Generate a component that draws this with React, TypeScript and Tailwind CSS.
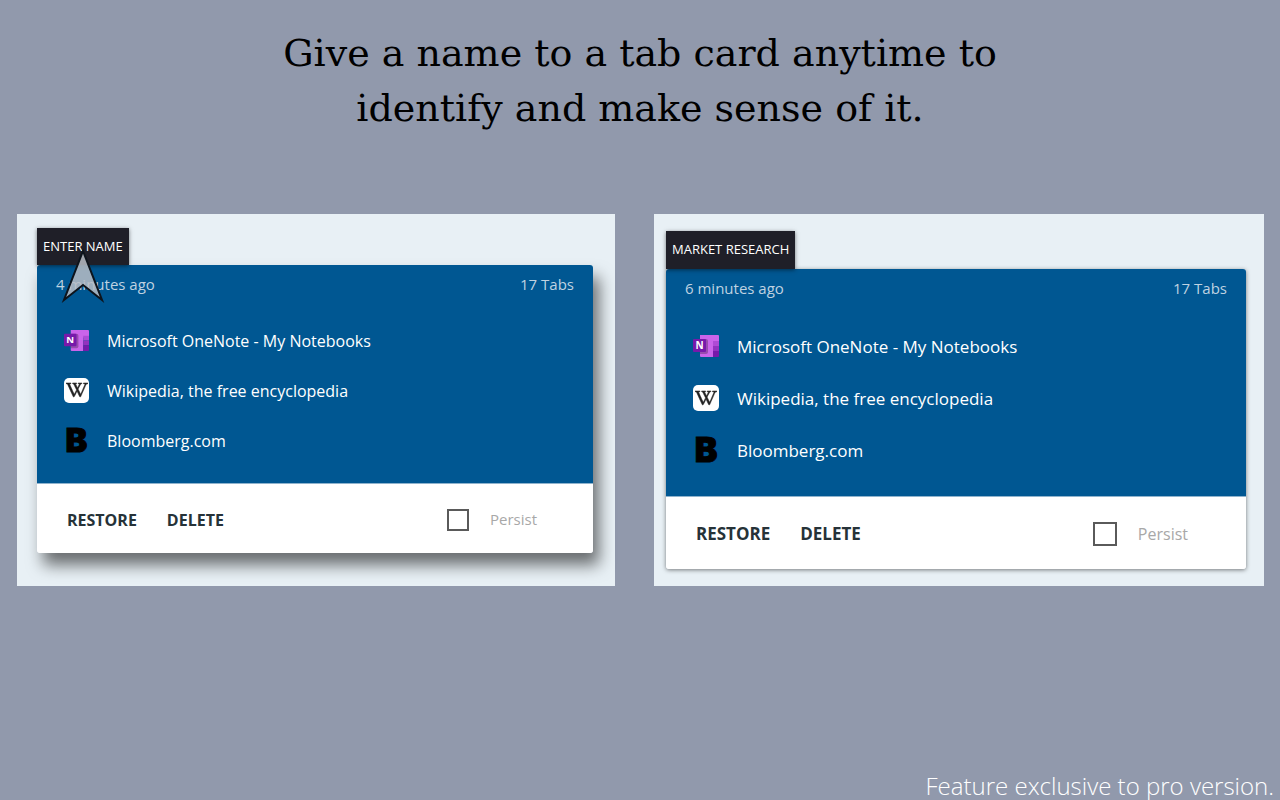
import React from "react";
import { clsx } from "clsx";
import { SiWikipedia } from "react-icons/si";

interface TabCardProps {
  id: string;
  name: string;
  age: string;
  count: string;
  large?: boolean;
  pointer?: boolean;
}

interface TabRowProps {
  icon: React.ReactNode;
  title: string;
  large?: boolean;
}

export default function App() {
  return (
    <main className="flex min-h-screen flex-col overflow-hidden bg-[#9199ac] font-['Open_Sans','Noto_Sans',sans-serif]">
      <h1 className="mx-auto max-w-3xl pt-[26px] text-center font-['DejaVu_Serif',serif] text-[38px] leading-[55px] text-black">
        Give a name to a tab card anytime to identify and make sense of it.
      </h1>

      <div className="mt-[78px] grid grid-cols-[598fr_610fr] items-stretch gap-[39px] pr-4 pl-[17px]">
        <section className="bg-[#e8f0f5] pt-[14px] pr-[22px] pb-[33px] pl-5">
          <TabCard id="unnamed" name="ENTER NAME" age="4 minutes ago" count="17 Tabs" pointer />
        </section>
        <section className="bg-[#e8f0f5] pt-[17px] pr-[18px] pb-4 pl-3">
          <TabCard id="named" name="MARKET RESEARCH" age="6 minutes ago" count="17 Tabs" large />
        </section>
      </div>

      <p className="mt-auto pr-1.5 pb-0.5 text-right text-[24px] leading-6 font-light text-white">
        Feature exclusive to pro version.
      </p>
    </main>
  );
}

function TabCard({ id, name, age, count, large, pointer }: TabCardProps) {
  return (
    <article>
      <div className="relative z-10 w-fit">
        <button
          type="button"
          className={clsx(
            "block bg-[#1f1f28] px-1.5 text-[13px] text-white shadow-[0_1px_4px_rgba(0,0,0,0.5)]",
            large ? "h-[38px] font-medium" : "h-[37px]"
          )}
        >
          {name}
        </button>
        {pointer && <Pointer />}
      </div>

      <div
        className={clsx(
          "overflow-hidden rounded-[3px]",
          large ? "shadow-[0_1px_4px_rgba(0,0,0,0.5)]" : "shadow-[6px_12px_16px_rgba(0,0,0,0.55)]"
        )}
      >
        <div className={clsx("bg-[#005792]", large ? "pb-5" : "pb-[18px]")}>
          <div className="flex h-[38px] items-center justify-between px-[19px] text-[15px] text-[#bfd2e1]">
            <span>{age}</span>
            <span>{count}</span>
          </div>
          <ul className={large ? "pt-[13px]" : "pt-3"}>
            <TabRow icon={<OneNoteIcon />} title="Microsoft OneNote - My Notebooks" large={large} />
            <TabRow icon={<WikipediaIcon />} title="Wikipedia, the free encyclopedia" large={large} />
            <TabRow icon={<BloombergIcon />} title="Bloomberg.com" large={large} />
          </ul>
        </div>

        <div
          className={clsx(
            "flex items-center border-t border-[#8fb3cd] bg-white pt-0.5 pl-[30px] text-[#263238]",
            large ? "h-[73px] pr-[58px]" : "h-[70px] pr-[56px]"
          )}
        >
          <div className={clsx("flex gap-[30px] font-bold", large ? "text-[17px]" : "text-[16px]")}>
            <button type="button">RESTORE</button>
            <button type="button">DELETE</button>
          </div>
          <div className="ml-auto flex items-center gap-[21px]">
            <input
              id={`persist-${id}`}
              type="checkbox"
              className={clsx("appearance-none border-2 border-[#5a5a5a] bg-white", large ? "size-6" : "size-[22px]")}
            />
            <label
              htmlFor={`persist-${id}`}
              className={clsx("text-[#a8a8a8]", large ? "text-[16px]" : "text-[15px]")}
            >
              Persist
            </label>
          </div>
        </div>
      </div>
    </article>
  );
}

function TabRow({ icon, title, large }: TabRowProps) {
  return (
    <li
      className={clsx(
        "flex items-center gap-[18px] pl-[27px] text-white",
        large ? "h-[52px] text-[17px]" : "h-[50px] text-[16px]"
      )}
    >
      <span className={clsx("shrink-0", large ? "size-[26px]" : "size-[25px]")}>{icon}</span>
      <span className="pt-0.5">{title}</span>
    </li>
  );
}

function OneNoteIcon() {
  return (
    <svg viewBox="0 0 26 26" className="size-full" aria-hidden="true">
      <path d="M7 2h18a1 1 0 0 1 1 1v7H7z" fill="#ca64ea" />
      <path d="M7 8h13v16H8a1 1 0 0 1-1-1z" fill="#ca64ea" />
      <path d="M20 8h6v5h-6z" fill="#ae4bd5" />
      <path d="M20 13h6v5h-6z" fill="#9332bf" />
      <path d="M20 18h6v5a1 1 0 0 1-1 1h-5z" fill="#7719aa" />
      <path d="M7 6h6a2 2 0 0 1 2 2v11a2 2 0 0 1-2 2H7z" fill="#000" opacity=".25" />
      <rect y="6" width="13" height="13" rx="1" fill="#7719aa" />
      <text x="6.5" y="16" textAnchor="middle" fontSize="10" fontWeight="700" fill="#fff">
        N
      </text>
    </svg>
  );
}

function WikipediaIcon() {
  return (
    <span className="flex size-full items-center justify-center rounded-[5px] bg-white text-[22px] text-[#222]">
      <SiWikipedia stroke="currentColor" strokeWidth={0.6} aria-hidden="true" />
    </span>
  );
}

function BloombergIcon() {
  return (
    <svg viewBox="0 0 26 26" className="size-full overflow-visible" aria-hidden="true">
      <text
        x="13"
        y="25"
        textAnchor="middle"
        fontFamily="Inter, sans-serif"
        fontSize="34"
        fontWeight="900"
        fill="#000"
        stroke="#000"
      >
        B
      </text>
    </svg>
  );
}

// Mouse pointer resting over the name tag
function Pointer() {
  return (
    <svg viewBox="0 0 44 56" className="pointer-events-none absolute top-5 left-6 h-14 w-11" aria-hidden="true">
      <path
        d="M22 3 41 52 22 37 3 52z"
        fill="#b9bdc4"
        fillOpacity=".85"
        stroke="#0d141c"
        strokeWidth="2"
        strokeLinejoin="miter"
      />
    </svg>
  );
}
